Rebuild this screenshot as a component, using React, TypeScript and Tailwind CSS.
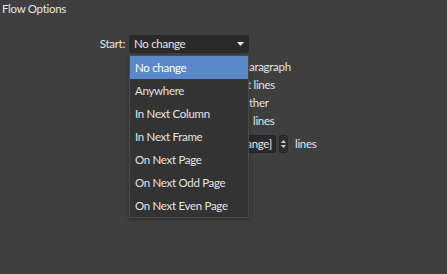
import React from "react";

const startOptions = [
  "No change",
  "Anywhere",
  "In Next Column",
  "In Next Frame",
  "On Next Page",
  "On Next Odd Page",
  "On Next Even Page",
];

function Chevron() {
  return (
    <svg width="7" height="4" viewBox="0 0 7 4" className="fill-[#e8e8e8]">
      <path d="M0 0h7L3.5 4z" />
    </svg>
  );
}

function Spinner() {
  return (
    <div className="w-[9px] h-[18px] rounded-[3px] border border-[#262626] bg-[#2c2c2c] flex flex-col items-center justify-center gap-[2px]">
      <svg width="5" height="3" viewBox="0 0 5 3" className="fill-[#cfcfcf]">
        <path d="M0 3h5L2.5 0z" />
      </svg>
      <svg width="5" height="3" viewBox="0 0 5 3" className="fill-[#cfcfcf]">
        <path d="M0 0h5L2.5 3z" />
      </svg>
    </div>
  );
}

export default function App() {
  return (
    <div
      className="w-[447px] h-[274px] bg-[#3f3f3f] text-[#e4e4e4] text-[11.5px] tracking-[-0.3px] overflow-hidden"
      style={{ fontFamily: 'Lato, "Liberation Sans", sans-serif' }}
    >
      <div className="pl-[2px] pt-[1px] leading-[16px]">Flow Options</div>

      <div className="relative mt-[18px]">
        {/* Start row */}
        <div className="flex items-center">
          <div className="w-[125px] text-right">Start:</div>
          <div className="ml-[4px] w-[120px] h-[18px] rounded-[3px] bg-[#2a2a2a] flex items-center justify-between pl-[5px] pr-[5px]">
            <span>No change</span>
            <Chevron />
          </div>
        </div>

        {/* Options partly behind the menu */}
        <div className="mt-[5px] flex flex-col">
          <div className="flex h-[18px] items-center">
            <span className="w-[249px] shrink-0" />
            <span>aragraph</span>
          </div>
          <div className="flex h-[18px] items-center">
            <span className="w-[247px] shrink-0" />
            <span>t lines</span>
          </div>
          <div className="flex h-[18px] items-center">
            <span className="w-[249px] shrink-0" />
            <span>ther</span>
          </div>
          <div className="flex h-[18px] items-center">
            <span className="w-[253px] shrink-0" />
            <span>lines</span>
          </div>
          <div className="flex items-center mt-[5px] h-[18px]">
            <div className="ml-[249px] w-[27px] h-[18px] rounded-r-[3px] bg-[#2a2a2a] border border-l-0 border-[#262626] flex items-center justify-end pr-[3px]">
              ange]
            </div>
            <div className="ml-[3px]">
              <Spinner />
            </div>
            <span className="ml-[7px]">lines</span>
          </div>
        </div>

        {/* Open menu */}
        <div className="absolute left-[129px] top-[20px] w-[120px] bg-[#333333] border border-[#4a4a4a] flex flex-col shadow-[0_2px_4px_rgba(0,0,0,0.3)]">
          {startOptions.map((opt, i) => (
            <div
              key={opt}
              className={
                i === 0
                  ? "h-[23px] flex items-center pl-[5px] bg-[#5b88c9] text-white"
                  : "h-[23px] flex items-center pl-[5px]"
              }
            >
              {opt}
            </div>
          ))}
        </div>
      </div>
    </div>
  );
}
